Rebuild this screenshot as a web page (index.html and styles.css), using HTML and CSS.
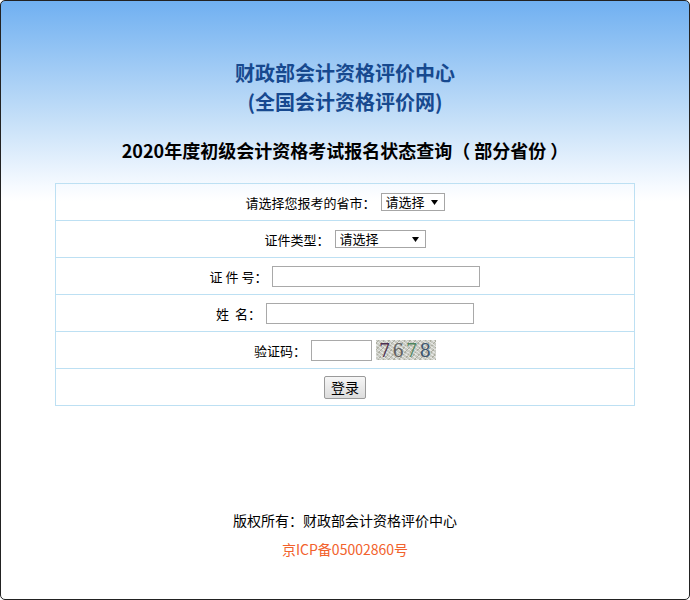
FILE: index.html
```html
<!DOCTYPE html>
<html lang="zh-CN">
<head>
    <meta charset="UTF-8">
    <meta name="viewport" content="width=device-width, initial-scale=1.0">
    <title>2020年度初级会计资格考试报名状态查询</title>
<link rel="stylesheet" href="styles.css">
</head>
<body>
    <div class="page">
        <div class="header">
            <h1 class="org">财政部会计资格评价中心<br>(全国会计资格评价网)</h1>
            <h2 class="title">2020年度初级会计资格考试报名状态查询（ 部分省份 ）</h2>
        </div>

        <table class="query">
            <tr>
                <td>
                    <div class="row">
                        <label>请选择您报考的省市：</label>
                        <select class="sel sel-prov"><option>请选择</option></select>
                    </div>
                </td>
            </tr>
            <tr>
                <td>
                    <div class="row">
                        <label>证件类型：</label>
                        <select class="sel sel-type"><option>请选择</option></select>
                    </div>
                </td>
            </tr>
            <tr>
                <td>
                    <div class="row">
                        <label>证 件 号：</label>
                        <input type="text" class="txt txt-long">
                    </div>
                </td>
            </tr>
            <tr>
                <td>
                    <div class="row">
                        <label>姓&nbsp;&nbsp;名：</label>
                        <input type="text" class="txt txt-long">
                    </div>
                </td>
            </tr>
            <tr>
                <td>
                    <div class="row">
                        <label>验证码：</label>
                        <input type="text" class="txt txt-code">
                        <span class="captcha"><i class="c1">7</i><i class="c2">6</i><i class="c3">7</i><i class="c4">8</i></span>
                    </div>
                </td>
            </tr>
            <tr>
                <td>
                    <div class="row">
                        <button class="btn-login">登录</button>
                    </div>
                </td>
            </tr>
        </table>

        <div class="footer">
            <p>版权所有：财政部会计资格评价中心</p>
            <p class="icp">京ICP备05002860号</p>
        </div>
    </div>
</body>
</html>
```

FILE: styles.css
```css
*{
    box-sizing: border-box;
}
body{
    margin: 0;
    font-family: "Noto Sans CJK SC", "Liberation Sans", sans-serif;
    font-size: 13px;
    color: #000;
}
.page{
    height: 600px;
    border: 1px solid #222;
    border-radius: 5px;
    background: linear-gradient(to bottom, #70b0f1 0, #c6e0f8 120px, #f6faff 185px, #fff 200px);
    overflow: hidden;
}
.header{
    padding-top: 57px;
    text-align: center;
}
.org{
    margin: 0;
    font-size: 20px;
    line-height: 29px;
    font-weight: bold;
    color: #17498f;
}
.title{
    margin: 20px 0 0;
    font-size: 18px;
    line-height: 29px;
    font-weight: bold;
    color: #000;
}
.query{
    width: 580px;
    margin: 18px auto 0;
    border-collapse: collapse;
}
.query td{
    height: 37px;
    padding: 0;
    border: 1px solid #bde0f3;
    text-align: center;
}
.row{
    display: flex;
    justify-content: center;
    align-items: center;
    gap: 5px;
}
.sel{
    appearance: none;
    -webkit-appearance: none;
    height: 18px;
    padding: 0 0 0 4px;
    border: 1px solid #a6a6a6;
    border-radius: 0;
    font-family: inherit;
    font-size: 13px;
    line-height: 16px;
    color: #000;
    background: #fff url("data:image/svg+xml,%3Csvg xmlns='http://www.w3.org/2000/svg' width='7' height='7'%3E%3Cpath d='M0 1h7L3.5 6z' fill='%23000'/%3E%3C/svg%3E") no-repeat right 6px center;
}
.sel-prov{
    width: 64px;
}
.sel-type{
    width: 91px;
}
.txt{
    height: 21px;
    border: 1px solid #a9a9a9;
    padding: 0 2px;
    background: #fff;
    font-size: 13px;
}
.txt-long{
    width: 208px;
}
.txt-code{
    width: 61px;
}
.captcha{
    display: flex;
    justify-content: center;
    align-items: center;
    width: 60px;
    height: 20px;
    margin-left: -1px;
    font-family: "DejaVu Serif", serif;
    font-size: 18px;
    letter-spacing: 2px;
    background:
        repeating-linear-gradient(35deg, rgba(255,255,255,.5) 0 1px, transparent 1px 3px),
        repeating-linear-gradient(-50deg, rgba(140,140,120,.45) 0 1px, transparent 1px 4px),
        #c9cbc4;
}
.captcha i{
    font-style: normal;
}
.c1{ color: #4e2f50; }
.c2{ color: #626262; }
.c3{ color: #4f8560; }
.c4{ color: #3e566f; }
.btn-login{
    width: 42px;
    height: 23px;
    padding: 0;
    border: 1px solid #9a9a9a;
    border-radius: 2px;
    background: linear-gradient(#f6f6f6, #dcdcdc);
    font-family: inherit;
    font-size: 14px;
    color: #000;
}
.footer{
    margin-top: 100px;
    text-align: center;
    font-size: 14px;
    line-height: 29px;
}
.footer p{
    margin: 0;
}
.icp{
    color: #f2622c;
}
```
